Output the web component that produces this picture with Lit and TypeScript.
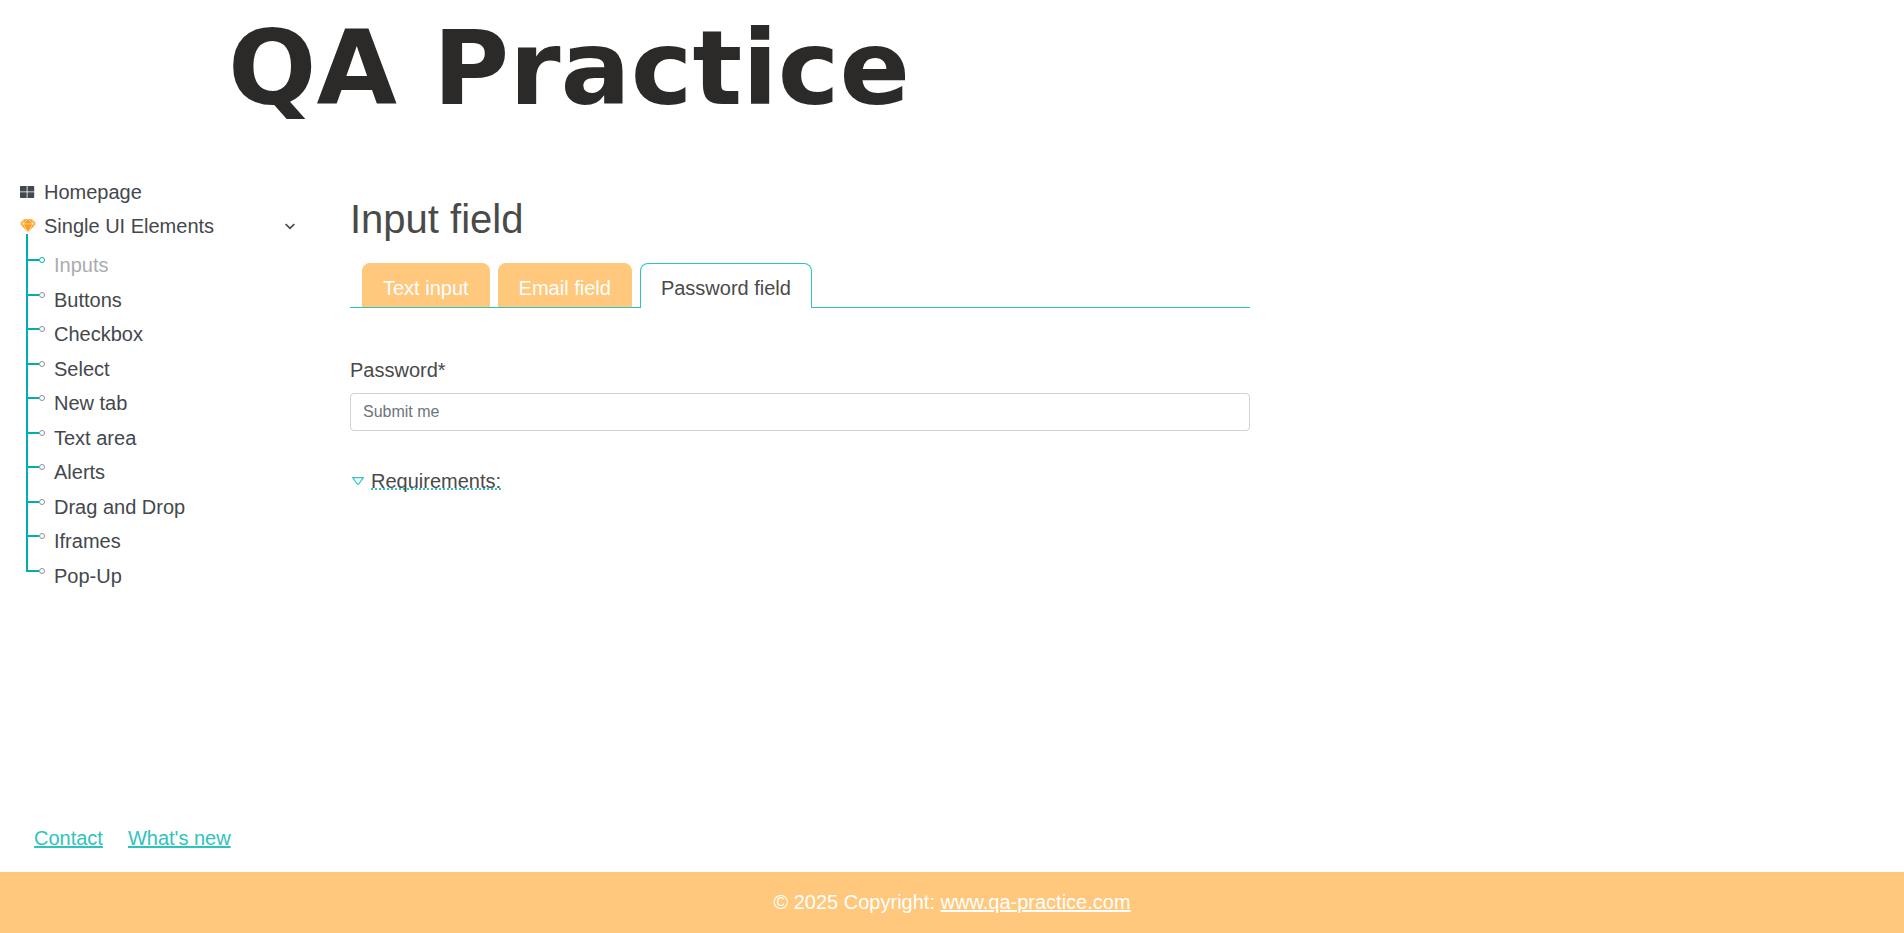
import { LitElement, html, css, svg } from "lit";
import { customElement, state } from "lit/decorators.js";

const ELEMENTS = [
  "Inputs",
  "Buttons",
  "Checkbox",
  "Select",
  "New tab",
  "Text area",
  "Alerts",
  "Drag and Drop",
  "Iframes",
  "Pop-Up",
];

const TABS = ["Text input", "Email field", "Password field"];

const gridIcon = svg`<path fill="currentColor" d="M.8 0H6.700V5.500H0V.8Q0 0 .8 0ZM7.500 0H13.400Q14.200 0 14.200 .8V5.500H7.500ZM0 6.300H6.700V12H.8Q0 12 0 11.200ZM7.500 6.300H14.200V11.200Q14.200 12 13.400 12H7.500Z"/>`;

const gemIcon = svg`
  <path fill="currentColor" d="M3.200 .5L8 0L12.800 .5L16 4.700L8 13.600L0 4.700Z"/>
  <path fill="none" stroke="#fff" stroke-width=".6" d="M0 4.900H16M3.200 .5V4.900L8 13.600L12.800 4.900V.5M7.600 0L3.200 4.900M8.400 0L12.800 4.900"/>`;

@customElement("app-root")
export class AppRoot extends LitElement {
  @state() private activeTab = 2;

  static styles = css`
    :host {
      display: flex;
      flex-direction: column;
      min-height: 100vh;
      font-family: "Liberation Sans", Arial, sans-serif;
      font-size: 20px;
      line-height: 30px;
      color: #4a4a4a;
      background: #fff;
    }
    * {
      box-sizing: border-box;
    }
    header {
      padding: 0 20px 44px 228px;
    }
    .logo {
      display: block;
      font-family: "DejaVu Sans", Verdana, sans-serif;
      font-weight: 700;
      font-size: 104px;
      line-height: 136px;
      color: #2b2a29;
      text-decoration: none;
      white-space: nowrap;
    }
    .layout {
      display: flex;
    }
    nav {
      flex: 0 0 320px;
      padding: 0 20px;
      color: #43484d;
    }
    nav a {
      color: inherit;
      text-decoration: none;
    }
    .menu {
      display: flex;
      flex-direction: column;
      gap: 10px;
    }
    .menu-row {
      display: flex;
      align-items: center;
      width: 100%;
      padding: 0 5px 0 0;
      border: 0;
      background: none;
      font: inherit;
      line-height: 24px;
      color: inherit;
      text-align: left;
    }
    .menu-icon {
      flex: 0 0 16px;
      height: 14px;
      margin-right: 8px;
    }
    .gem {
      color: #ff9c1a;
    }
    .chevron {
      width: 10px;
      height: 7px;
      margin-left: auto;
    }
    .tree {
      display: grid;
      grid-auto-rows: 1fr;
      min-height: 359px;
      margin: -4px 0 0 6px;
      padding: 14px 0 0;
      list-style: none;
      background: linear-gradient(#00afaa, #00afaa) 0 0 / 2px calc(100% - 21px)
        no-repeat;
    }
    .tree li {
      display: flex;
      align-items: center;
    }
    .branch {
      flex: none;
      align-self: flex-start;
      width: 20px;
      height: 8px;
      margin: 8px 8px 0 0;
      color: #8b9196;
    }
    .current {
      color: #a9adb2;
    }
    .current .branch {
      color: #00afaa;
    }
    main {
      flex: 1 1 0;
      max-width: 960px;
      padding: 15px 30px 0;
    }
    h1 {
      margin: 0 0 20px;
      font-size: 40px;
      font-weight: 400;
      line-height: 48px;
    }
    .tabs {
      display: flex;
      gap: 8px;
      padding-left: 12px;
      border-bottom: 1px solid #2ec4bc;
    }
    .tab {
      padding: 9px 20px 4px;
      border: 1px solid #ffc87c;
      border-bottom-width: 0;
      border-radius: 8px 8px 0 0;
      background: #ffc87c;
      font: inherit;
      color: #fff;
    }
    .tab.active {
      margin-bottom: -1px;
      padding-bottom: 5px;
      border-color: #2ec4bc;
      background: #fff;
      color: #4a4a4a;
    }
    form {
      margin-top: 47px;
    }
    label {
      display: block;
      margin-bottom: 8px;
    }
    input {
      display: block;
      width: 100%;
      height: 38px;
      padding: 6px 12px;
      border: 1px solid #cfd2da;
      border-radius: 4px;
      background: #fff;
      font: inherit;
      font-size: 16px;
      line-height: 24px;
      color: #4a4a4a;
    }
    input::placeholder {
      color: #6c757d;
      opacity: 1;
    }
    .requirements {
      display: flex;
      align-items: center;
      gap: 7px;
      margin-top: 35px;
      padding: 0 0 0 2px;
      border: 0;
      background: none;
      font: inherit;
      color: inherit;
    }
    .requirements span {
      text-decoration: underline dotted 2px #2ec4bc;
      text-decoration-skip-ink: none;
      text-underline-offset: 0;
    }
    .triangle {
      width: 12px;
      height: 8px;
      color: #2ec4bc;
    }
    .links {
      display: flex;
      gap: 25px;
      margin-top: auto;
      padding: 20px 34px 19px;
    }
    .links a {
      color: #2ec4bc;
      text-decoration-thickness: 2px;
    }
    footer {
      padding: 15px 20px 16px;
      background: #ffc87c;
      color: #fff;
      text-align: center;
    }
    footer a {
      color: inherit;
      text-decoration-thickness: 2px;
    }
  `;

  render() {
    return html`
      <header><a class="logo" href="#">QA Practice</a></header>
      <div class="layout">
        <nav aria-label="Main">
          <div class="menu">
            <a class="menu-row" href="#">
              <svg class="menu-icon" viewBox="0 -1 16 14" aria-hidden="true">${gridIcon}</svg>
              Homepage
            </a>
            <button class="menu-row" type="button" aria-expanded="true">
              <svg class="menu-icon gem" viewBox="0 0 16 14" aria-hidden="true">${gemIcon}</svg>
              Single UI Elements
              <svg class="chevron" viewBox="0 0 10 7" aria-hidden="true">
                <path d="M.6 1L5 5.400L9.400 1" fill="none" stroke="currentColor" stroke-width="1.700" />
              </svg>
            </button>
          </div>
          <ul class="tree">
            ${ELEMENTS.map(
              (name, i) => html`
                <li class=${i === 0 ? "current" : ""}>
                  <svg class="branch" viewBox="0 0 20 8" aria-hidden="true">
                    <path d="M0 4H13" stroke="#00afaa" stroke-width="2" />
                    <circle cx="16" cy="4" r="2.500" fill="#fff" stroke="currentColor" />
                  </svg>
                  <a href="#">${name}</a>
                </li>
              `
            )}
          </ul>
        </nav>
        <main>
          <h1>Input field</h1>
          <div class="tabs" role="tablist">
            ${TABS.map(
              (name, i) => html`
                <button
                  class="tab ${i === this.activeTab ? "active" : ""}"
                  type="button"
                  role="tab"
                  aria-selected=${i === this.activeTab}
                  @click=${() => (this.activeTab = i)}
                >${name}</button>
              `
            )}
          </div>
          <form @submit=${(e: Event) => e.preventDefault()}>
            <label for="password">Password*</label>
            <input id="password" type="password" placeholder="Submit me" required />
          </form>
          <button class="requirements" type="button">
            <svg class="triangle" viewBox="0 0 12 8" aria-hidden="true">
              <path d="M.6 .7H11.400L6.700 7Q6 7.600 5.300 7Z" fill="none" stroke="currentColor" stroke-linejoin="round" stroke-width="1.200" />
            </svg>
            <span>Requirements:</span>
          </button>
        </main>
      </div>
      <div class="links">
        <a href="#">Contact</a>
        <a href="#">What's new</a>
      </div>
      <footer>© 2025 Copyright: <a href="#">www.qa-practice.com</a></footer>
    `;
  }
}
